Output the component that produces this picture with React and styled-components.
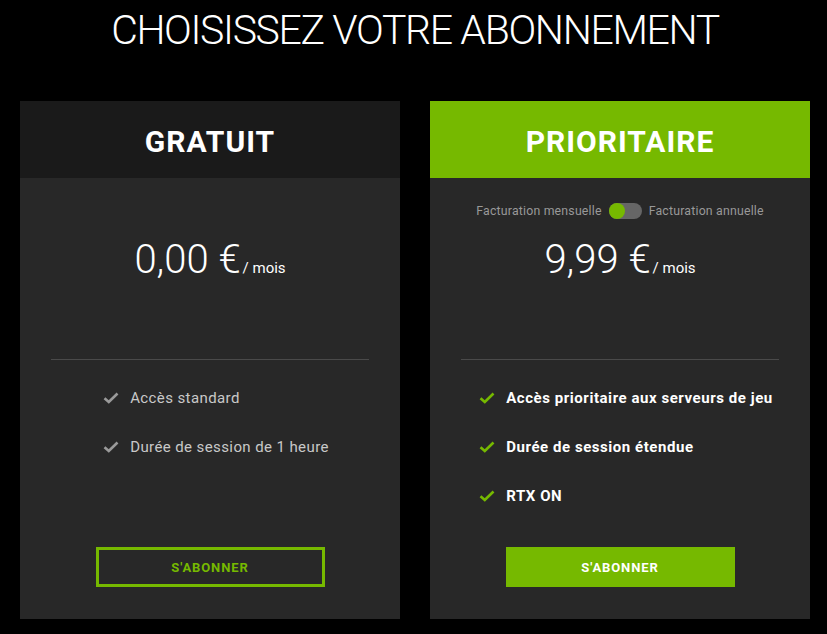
import React from 'react';
import styled, { createGlobalStyle } from 'styled-components';

const GREEN = '#76b900';

const GlobalStyle = createGlobalStyle`
  html, body {
    margin: 0;
    padding: 0;
    background: #000;
  }
  body {
    font-family: Roboto, "Liberation Sans", sans-serif;
    color: #fff;
  }
`;

const Page = styled.div`
  width: 827px;
  height: 634px;
  background: #000;
  padding: 0 17px 0 20px;
  box-sizing: border-box;
`;

const Title = styled.h1`
  margin: 0;
  height: 101px;
  padding-top: 6px;
  box-sizing: border-box;
  text-align: center;
  font-weight: 300;
  font-size: 41px;
  line-height: 48px;
  letter-spacing: -1.35px;
  color: #fff;
`;

const Cards = styled.div`
  display: grid;
  grid-template-columns: 380px 380px;
  gap: 30px;
`;

const Card = styled.div`
  display: flex;
  flex-direction: column;
  height: 518px;
  background: #282828;
`;

const Header = styled.div`
  height: 77px;
  padding-top: 3px;
  box-sizing: border-box;
  display: flex;
  align-items: center;
  justify-content: center;
  background: ${({ featured }) => (featured ? GREEN : '#1a1a1a')};
  font-weight: 700;
  font-size: 30px;
  letter-spacing: 1px;
  color: #fff;
`;

const PriceArea = styled.div`
  height: 181px;
  padding-top: 25px;
  box-sizing: border-box;
  display: flex;
  flex-direction: column;
  align-items: center;
`;

const BillingRow = styled.div`
  height: 16px;
  display: flex;
  align-items: center;
  gap: 7px;
  font-size: 12.3px;
  letter-spacing: 0.2px;
  color: #999;
  visibility: ${({ hidden }) => (hidden ? 'hidden' : 'visible')};
`;

const Toggle = styled.span`
  position: relative;
  width: 33px;
  height: 16px;
  border-radius: 8px;
  background: #666;

  &::before {
    content: '';
    position: absolute;
    left: 0;
    top: 0;
    width: 16px;
    height: 16px;
    border-radius: 50%;
    background: ${GREEN};
  }
`;

const Price = styled.div`
  margin-top: 17px;
  display: flex;
  align-items: baseline;
  font-weight: 300;
  font-size: 40px;
  line-height: 48px;
  color: #fff;
`;

const Per = styled.span`
  font-size: 15px;
  font-weight: 400;
  margin-left: 2px;
`;

const Divider = styled.hr`
  margin: 0 31px;
  border: 0;
  border-top: 1px solid #4a4a4a;
`;

const Features = styled.ul`
  list-style: none;
  margin: 0;
  padding: 28px 0 0 12px;
  display: flex;
  flex-direction: column;
  align-items: center;
`;

const FeatureList = styled.div`
  display: flex;
  flex-direction: column;
  gap: 29px;
`;

const Feature = styled.li`
  display: flex;
  align-items: center;
  gap: 11px;
  height: 20px;
  font-size: 15px;
  letter-spacing: ${({ featured }) => (featured ? '0.55px' : '0.4px')};
  font-weight: ${({ featured }) => (featured ? 700 : 400)};
  color: ${({ featured }) => (featured ? '#fff' : '#c8c8c8')};
`;

const Button = styled.button`
  margin: auto auto 32px;
  width: 229px;
  height: 40px;
  box-sizing: border-box;
  border: 3px solid ${GREEN};
  background: ${({ featured }) => (featured ? GREEN : 'transparent')};
  color: ${({ featured }) => (featured ? '#fff' : GREEN)};
  font-family: Roboto, "Liberation Sans", sans-serif;
  font-weight: 700;
  font-size: 13px;
  letter-spacing: 0.9px;
  cursor: pointer;
`;

const Check = ({ color }) => (
  <svg width="16" height="12" viewBox="0 0 16 12">
    <path d="M1.5 6.2 L5.8 10 L14.5 1.5" fill="none" stroke={color} strokeWidth="2.6" />
  </svg>
);

const plans = [
  {
    name: 'GRATUIT',
    price: '0,00 €',
    features: ['Accès standard', 'Durée de session de 1 heure'],
  },
  {
    name: 'PRIORITAIRE',
    price: '9,99 €',
    featured: true,
    features: [
      'Accès prioritaire aux serveurs de jeu',
      'Durée de session étendue',
      'RTX ON',
    ],
  },
];

const App = () => {
  return (
    <Page>
      <GlobalStyle />
      <Title>CHOISISSEZ VOTRE ABONNEMENT</Title>
      <Cards>
        {plans.map((plan) => (
          <Card key={plan.name}>
            <Header featured={plan.featured}>{plan.name}</Header>
            <PriceArea>
              <BillingRow hidden={!plan.featured}>
                <span>Facturation mensuelle</span>
                <Toggle />
                <span>Facturation annuelle</span>
              </BillingRow>
              <Price>
                {plan.price}
                <Per>/ mois</Per>
              </Price>
            </PriceArea>
            <Divider />
            <Features>
              <FeatureList>
                {plan.features.map((f) => (
                  <Feature key={f} featured={plan.featured}>
                    <Check color={plan.featured ? GREEN : '#9a9a9a'} />
                    {f}
                  </Feature>
                ))}
              </FeatureList>
            </Features>
            <Button featured={plan.featured}>S'ABONNER</Button>
          </Card>
        ))}
      </Cards>
    </Page>
  );
};

export default App;
